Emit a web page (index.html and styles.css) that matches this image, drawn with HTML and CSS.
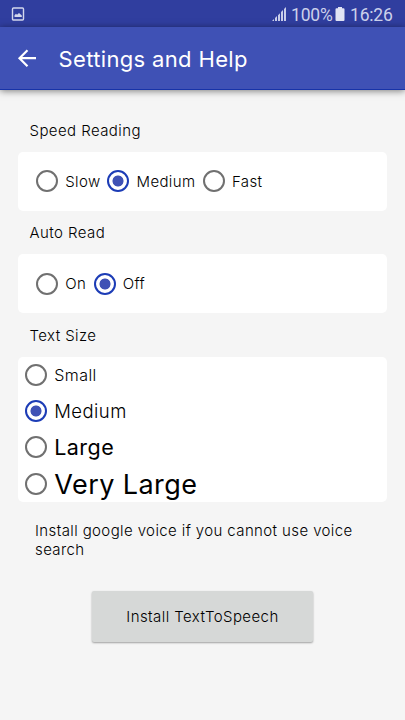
FILE: index.html
```html
<!DOCTYPE html>
<html lang="en">
<head>
<meta charset="utf-8">
<title>Settings and Help</title>
<link rel="stylesheet" href="styles.css">
</head>
<body>
<div class="status">
  <svg class="status-picture" width="14" height="15" viewBox="0 0 14 15"><rect x="1.500" y="1" width="11" height="12" rx="1" fill="none" stroke="#d3d7ed" stroke-width="1.4"/><path d="M3.500 10V8.200L5 6.700 6 7.700 8 5.900l2.800 2.700V10z" fill="#d3d7ed"/></svg>
  <svg class="status-signal" width="15" height="15" viewBox="0 0 15 15" fill="#c9ceea"><path d="M0 14l2-2v2zM3 11l2-2v5H3zM6 8.200l2-2V14H6zM9 5l2-2v11H9zM12 2l2-2v14h-2z"/></svg>
  <span class="status-percent">100%</span>
  <svg class="status-battery" width="10" height="15" viewBox="0 0 10 15"><path d="M3 0h4v1.300h1.500Q9.500 1.300 9.500 2.300V13q0 1-1 1h-7q-1 0-1-1V2.300q0-1 1-1H3z" fill="#e1e4f4"/></svg>
  <span class="status-time">16:26</span>
</div>
<header class="bar">
  <svg class="back" width="20" height="20" viewBox="0 0 20 20" fill="none" stroke="#fff" stroke-width="2.200"><path d="M10.500 2.200L2.500 10.200l8 8M2.500 10.200H19"/></svg>
  <h1 class="title">Settings and Help</h1>
</header>
<main class="content">
  <h2 class="label">Speed Reading</h2>
  <div class="card row">
    <div class="option slow"><i class="radio"></i><span>Slow</span></div>
    <div class="option mid"><i class="radio on"></i><span>Medium</span></div>
    <div class="option"><i class="radio"></i><span>Fast</span></div>
  </div>
  <h2 class="label">Auto Read</h2>
  <div class="card row">
    <div class="option yes"><i class="radio"></i><span>On</span></div>
    <div class="option"><i class="radio on"></i><span>Off</span></div>
  </div>
  <h2 class="label">Text Size</h2>
  <div class="card sizes">
    <div class="option small"><i class="radio"></i><span>Small</span></div>
    <div class="option medium"><i class="radio on"></i><span>Medium</span></div>
    <div class="option large"><i class="radio"></i><span>Large</span></div>
    <div class="option very"><i class="radio"></i><span>Very Large</span></div>
  </div>
  <p class="hint">Install google voice if you cannot use voice search</p>
  <button class="install">Install TextToSpeech</button>
</main>
</body>
</html>
```
FILE: styles.css
```css
* { box-sizing: border-box; }
body { margin: 0; height: 720px; overflow: hidden; background: #f5f5f5; color: #000; font: 365 15px/19px Inter, sans-serif; letter-spacing: .42px; }
svg { display: block; flex: none; }
.status { display: flex; height: 27px; padding-top: 7px; background: #303e9f; color: #ccd1eb; font: 17.5px/16px Roboto, sans-serif; letter-spacing: -.2px; }
.status-picture { margin-left: 11px; }
.status-signal { margin-left: 247px; }
.status-percent { width: 43px; margin-left: 4px; }
.status-battery { margin-left: 1px; }
.status-time { margin-left: 5px; }
.bar { display: flex; align-items: center; height: 63px; padding-left: 17px; background: #3f51b5; border-bottom: 1px solid #1733a8; box-shadow: 0 1px 7px rgba(0,0,0,.5); position: relative; }
.title { margin: 2px 0 0 21.500px; color: #fff; font-size: 22px; font-weight: 380; line-height: 28px; letter-spacing: .35px; }
.content { padding: 31px 18px 0; }
.label { height: 31px; margin: 0 0 0 11.500px; font-size: 15px; font-weight: 365; line-height: 19px; }
.card { border-radius: 5px; background: #fff; }
.row { display: flex; align-items: center; height: 58.500px; margin-bottom: 12.800px; padding-left: 18px; }
.option { display: flex; align-items: center; gap: 7.300px; white-space: nowrap; }
.row .option { font-size: 15px; letter-spacing: .35px; }
.slow { width: 71.300px; }
.mid { width: 95.400px; }
.yes { width: 57.500px; }
.radio { flex: none; width: 22px; height: 22px; border: 2px solid #707070; border-radius: 50%; }
.radio.on { border-color: #1c3cb6; background: radial-gradient(circle, #3f51b5 5.100px, #fff 5.900px); }
.sizes { height: 145.500px; padding-left: 7px; }
.sizes .option { height: 36.300px; }
.small { font-size: 16px; }
.small span { padding-top: 1px; }
.medium { font-size: 18.500px; }
.large { font-size: 21.500px; }
.large, .very { font-weight: 375; }
.large span { padding-top: 1px; }
.very { font-size: 27px; }
.very span { padding-top: 2px; }
.hint { margin: 19.200px 20px 0 17px; letter-spacing: .39px; }
.install { display: block; width: 221px; height: 51px; margin: 31.500px auto 0; padding: 0; border: 0; border-radius: 2px; background: #d6d8d7; color: #000; font: inherit; letter-spacing: .43px; box-shadow: 0 1px 2px rgba(0,0,0,.35); }
```
